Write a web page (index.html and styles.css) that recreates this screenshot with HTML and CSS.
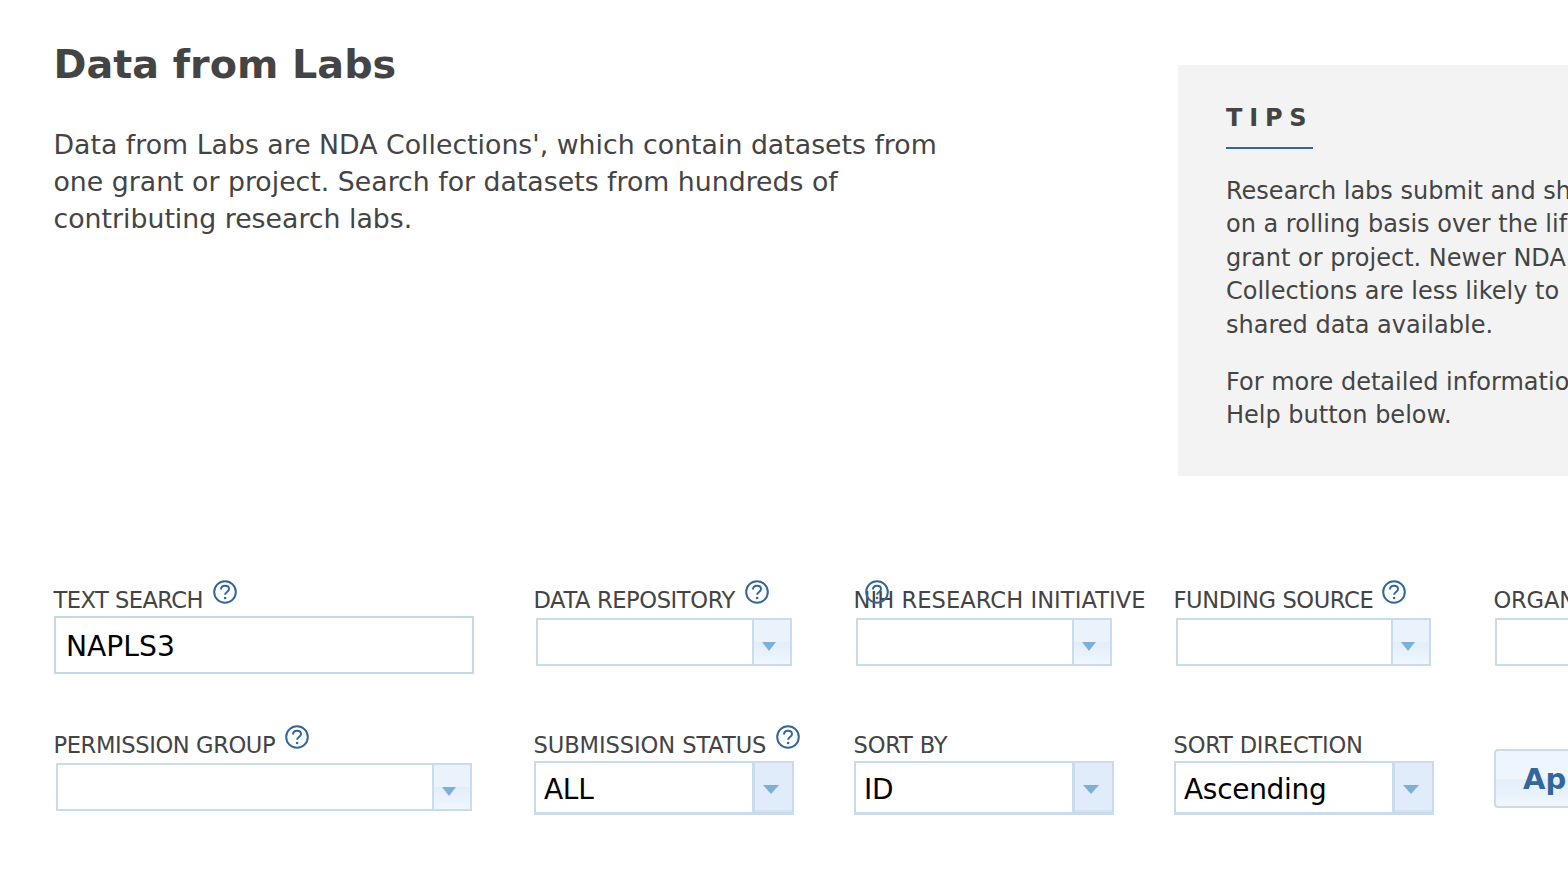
FILE: index.html
```html
<!DOCTYPE html>
<html lang="en">
<head>
<meta charset="utf-8">
<title>Data from Labs</title>
<link rel="stylesheet" href="styles.css">
</head>
<body>
<main class="page">
  <section class="intro">
    <div class="lead">
      <h1>Data from Labs</h1>
      <p>Data from Labs are NDA Collections', which contain datasets from<br>one grant or project. Search for datasets from hundreds of<br>contributing research labs.</p>
    </div>
    <aside class="tips">
      <h2>TIPS</h2>
      <p>Research labs submit and share data<br>on a rolling basis over the life of a<br>grant or project. Newer NDA<br>Collections are less likely to have<br>shared data available.</p>
      <p>For more detailed information, click the<br>Help button below.</p>
    </aside>
  </section>

  <section class="filters">
    <div class="field">
      <div class="label"><span class="tightest">TEXT SEARCH</span><svg class="help" viewBox="0 0 24 24"><use href="#help"/></svg></div>
      <div class="textbox">NAPLS3</div>
    </div>
    <div class="field inset">
      <div class="label"><span class="tighter">DATA REPOSITORY</span><svg class="help" viewBox="0 0 24 24"><use href="#help"/></svg></div>
      <div class="combo"><span class="value"></span><span class="trigger"><i class="arrow"></i></span></div>
    </div>
    <div class="field inset">
      <div class="label"><span class="loose">NIH RESEARCH INITIATIVE</span><svg class="help over" viewBox="0 0 24 24"><use href="#help"/></svg></div>
      <div class="combo"><span class="value"></span><span class="trigger"><i class="arrow"></i></span></div>
    </div>
    <div class="field inset">
      <div class="label"><span class="tighter">FUNDING SOURCE</span><svg class="help near" viewBox="0 0 24 24"><use href="#help"/></svg></div>
      <div class="combo w255"><span class="value"></span><span class="trigger"><i class="arrow"></i></span></div>
    </div>
    <div class="field inset org">
      <div class="label"><span>ORGANIZATION</span></div>
      <div class="combo w255"><span class="value"></span><span class="trigger"><i class="arrow"></i></span></div>
    </div>

    <div class="field inset">
      <div class="label"><span class="tighter">PERMISSION GROUP</span><svg class="help" viewBox="0 0 24 24"><use href="#help"/></svg></div>
      <div class="combo w416"><span class="value"></span><span class="trigger"><i class="arrow"></i></span></div>
    </div>
    <div class="field">
      <div class="label"><span class="slight">SUBMISSION STATUS</span><svg class="help" viewBox="0 0 24 24"><use href="#help"/></svg></div>
      <div class="combo set"><span class="value">ALL</span><span class="trigger"><i class="arrow"></i></span></div>
    </div>
    <div class="field">
      <div class="label"><span>SORT BY</span></div>
      <div class="combo set"><span class="value">ID</span><span class="trigger"><i class="arrow"></i></span></div>
    </div>
    <div class="field">
      <div class="label"><span>SORT DIRECTION</span></div>
      <div class="combo set"><span class="value">Ascending</span><span class="trigger"><i class="arrow"></i></span></div>
    </div>
    <div class="field">
      <button class="apply" type="button">Apply</button>
    </div>
  </section>
</main>
<svg class="defs" aria-hidden="true">
  <symbol id="help" viewBox="0 0 24 24">
    <circle cx="12" cy="12" r="10.8" fill="none" stroke="#336699" stroke-width="2"/>
    <path d="M8 9.6c0-2.3 1.7-3.8 4-3.8s4 1.3 4 3.3c0 2.9-3.9 2.9-3.9 5.7" fill="none" stroke="#336699" stroke-width="2"/>
    <circle cx="12.1" cy="18" r="1.3" fill="#336699"/>
  </symbol>
</svg>
</body>
</html>
```
FILE: styles.css
```css
* { box-sizing: border-box; }
html, body { margin: 0; height: 100%; }
body {
  background: #fff;
  color: #444;
  font-family: "DejaVu Sans", Verdana, sans-serif;
  overflow: hidden;
  width: 1568px;
  height: 888px;
}
.page { padding: 41px 0 0 54px; width: 1800px; }
.defs { display: none; }

.intro { display: flex; height: 539px; }
.lead { width: 1124px; flex: none; }
h1 { margin: 0 0 0 -0.5px; font-size: 39.7px; line-height: 47px; font-weight: 700; color: #444; }
.lead p { margin: 38px 0 0 -0.5px; font-size: 26.75px; line-height: 37px; }
.tips {
  width: 640px;
  height: 411px;
  margin: 24px 0 0;
  padding: 37px 48px 0;
  background: #f3f3f3;
  font-size: 24px;
  line-height: 33.4px;
}
.tips h2 {
  display: inline-block;
  margin: 0 0 26px;
  padding: 0 0 13px;
  border-bottom: 2px solid #336699;
  font-size: 24px;
  line-height: 32px;
  letter-spacing: 6.8px;
  font-weight: 700;
  color: #444;
}
.tips p { margin: 0 0 24px; }

.filters {
  display: grid;
  grid-template-columns: 480px 320px 320px 320px 320px;
  grid-template-rows: 145px auto;
}
.field { display: flex; flex-direction: column; align-items: flex-start; }
.label {
  position: relative;
  display: flex;
  align-items: flex-start;
  height: 36px;
  margin-left: -0.5px;
  padding-top: 6px;
  font-size: 22.6px;
  line-height: 28px;
  letter-spacing: -0.2px;
  color: #444;
  white-space: nowrap;
}
.tightest { letter-spacing: -0.55px; }
.tighter { letter-spacing: -0.4px; }
.slight { letter-spacing: -0.1px; }
.loose { letter-spacing: 0.05px; }
.help { width: 24px; height: 24px; margin: -6px 0 0 10px; flex: none; }
.help.near { margin-left: 8.5px; }
.help.over { position: absolute; left: 11px; top: 6px; margin: -6px 0 0; }

.textbox {
  width: 420px;
  height: 58px;
  padding: 0 10px;
  border: 2px solid #c5d8ea;
  font-size: 28.2px;
  line-height: 58px;
  color: #000;
}
.inset .combo { margin: 2px 0 0 2px; }
.org .combo { margin-left: 1px; }
.combo {
  display: flex;
  width: 256px;
  height: 48px;
  border: 2px solid #c9dbec;
  background: #fff;
}
.w255 { width: 255px; }
.w416 { width: 416px; }
.value { flex: 1; min-width: 0; padding-left: 8px; }
.trigger {
  position: relative;
  width: 38px;
  flex: none;
  border-left: 2px solid #c9dbec;
  background: linear-gradient(#eaf3fc 0 50%, #e2eefb 50%, #eff6fd 100%);
}
.arrow {
  position: absolute;
  left: 8px;
  top: 22px;
  width: 0;
  height: 0;
  border-left: 7.5px solid transparent;
  border-right: 7.5px solid transparent;
  border-top: 9px solid #7db0d8;
}
.set {
  width: 260px;
  height: 54px;
  border-width: 2px 2px 3px;
  font-size: 28px;
  letter-spacing: -0.3px;
  line-height: 54px;
  color: #000;
}
.set .trigger { background: #e0ecfa; width: 40px; border-left-width: 3px; box-shadow: inset 0 -2px 0 #d3e2f2; }
.set .arrow { border-left-width: 8px; border-right-width: 8px; }
.apply {
  width: 200px;
  height: 59px;
  margin-top: 24px;
  padding: 2px 0 0 27px;
  border: 2px solid #c9dbec;
  border-radius: 4px;
  background: linear-gradient(#eef5fd 0 50%, #e2eefb 50%, #eff6fd 100%);
  color: #336699;
  font: 700 29px/1 "DejaVu Sans", Verdana, sans-serif;
  text-align: left;
}
```
